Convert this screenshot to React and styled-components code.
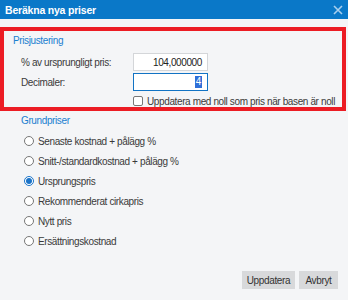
import React from 'react';
import styled, { createGlobalStyle } from 'styled-components';

const GlobalStyle = createGlobalStyle`
  html, body {
    margin: 0;
    padding: 0;
    background: #f4f5f7;
  }
  * { box-sizing: border-box; }
`;

const Dialog = styled.div`
  width: 348px;
  height: 300px;
  display: flex;
  flex-direction: column;
  background: #f4f5f7;
  font-family: "Liberation Sans", Arial, sans-serif;
  font-size: 10px;
  letter-spacing: -0.38px;
  color: #3a3a3a;
  overflow: hidden;
`;

const TitleBar = styled.div`
  height: 19px;
  flex: none;
  display: flex;
  align-items: center;
  justify-content: space-between;
  padding: 0 5px 0 5px;
  background: #0a78c8;
  color: #fff;
  font-weight: bold;
  font-size: 10.5px;
  letter-spacing: -0.2px;
`;

const Close = styled.svg`
  width: 10px;
  height: 10px;
`;

const Body = styled.div`
  flex: 1;
  display: flex;
  flex-direction: column;
  padding-top: 8px;
`;

const Highlight = styled.div`
  width: 346px;
  border: 4px solid #ec1c24;
  padding: 3px 0 0 9px;
`;

const Legend = styled.div`
  color: #1a7fd0;
  line-height: 13px;
`;

const Group = styled.div`
  padding: 6px 0 0 8px;
  display: flex;
  flex-direction: column;
  gap: 2px;
`;

const FieldRow = styled.div`
  display: grid;
  grid-template-columns: 112px 75px;
  align-items: center;
`;

const Field = styled.div`
  height: 18px;
  display: flex;
  align-items: center;
  justify-content: flex-end;
  padding-right: 5px;
  background: #fff;
  color: #222;
  border: 1px solid ${(p) => (p.focused ? '#1273c4' : '#d4d6d9')};
`;

const Selected = styled.span`
  background: #2f6fd8;
  color: #fff;
  line-height: 12px;
  padding: 0 1px;
`;

const CheckRow = styled.label`
  display: flex;
  align-items: center;
  gap: 4px;
  margin: 3px 0 1px 112px;
  height: 10px;
  white-space: nowrap;
`;

const Box = styled.span`
  flex: none;
  width: 10px;
  height: 10px;
  border: 1px solid #777;
  border-radius: 2px;
  background: #fff;
`;

const Section = styled.div`
  padding: 3px 0 0 21px;
  display: flex;
  flex-direction: column;
`;

const RadioList = styled.div`
  display: flex;
  flex-direction: column;
  padding: 4px 0 0 3px;
`;

const RadioRow = styled.div`
  height: 20px;
  display: flex;
  align-items: center;
  gap: 4px;
`;

const Radio = styled.span`
  width: 10px;
  height: 10px;
  border-radius: 50%;
  border: 1px solid ${(p) => (p.checked ? '#1a73c8' : '#777')};
  background: #fff;
  display: flex;
  align-items: center;
  justify-content: center;
  &::after {
    content: '';
    width: 6px;
    height: 6px;
    border-radius: 50%;
    background: ${(p) => (p.checked ? '#1a73c8' : 'transparent')};
  }
`;

const Footer = styled.div`
  margin-top: auto;
  display: flex;
  justify-content: flex-end;
  gap: 4px;
  padding: 0 10px 11px 0;
`;

const Button = styled.button`
  height: 18px;
  width: ${(p) => p.w}px;
  border: none;
  background: #d8d9db;
  color: #333;
  font-family: inherit;
  font-size: 10px;
  letter-spacing: -0.35px;
  padding: 0;
`;

const options = [
  'Senaste kostnad + pålägg %',
  'Snitt-/standardkostnad + pålägg %',
  'Ursprungspris',
  'Rekommenderat cirkapris',
  'Nytt pris',
  'Ersättningskostnad',
];

export default function App() {
  return (
    <Dialog>
      <GlobalStyle />
      <TitleBar>
        <span>Beräkna nya priser</span>
        <Close viewBox="0 0 10 10">
          <path d="M1 1 L9 9 M9 1 L1 9" stroke="#a9cfee" strokeWidth="1.6" />
        </Close>
      </TitleBar>
      <Body>
        <Highlight>
          <Legend>Prisjustering</Legend>
          <Group>
            <FieldRow>
              <span>% av ursprungligt pris:</span>
              <Field>104,000000</Field>
            </FieldRow>
            <FieldRow>
              <span>Decimaler:</span>
              <Field focused>
                <Selected>4</Selected>
              </Field>
            </FieldRow>
            <CheckRow>
              <Box />
              <span>Uppdatera med noll som pris när basen är noll</span>
            </CheckRow>
          </Group>
        </Highlight>
        <Section>
          <Legend>Grundpriser</Legend>
          <RadioList>
            {options.map((o, i) => (
              <RadioRow key={o}>
                <Radio checked={i === 2} />
                <span>{o}</span>
              </RadioRow>
            ))}
          </RadioList>
        </Section>
        <Footer>
          <Button w={53}>Uppdatera</Button>
          <Button w={39}>Avbryt</Button>
        </Footer>
      </Body>
    </Dialog>
  );
}
